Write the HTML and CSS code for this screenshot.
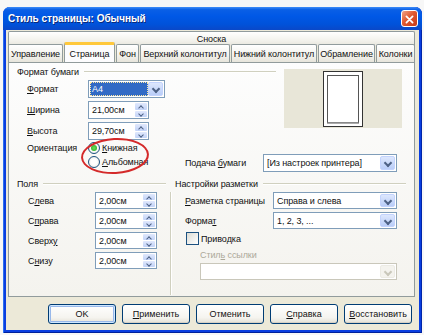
FILE: index.html
```html
<!DOCTYPE html>
<html>
<head>
  <meta charset="utf-8">
  <link rel="stylesheet" href="styles.css">
</head>
<body>
<div class="window">
  <div class="titlebar">
    <span class="title">Стиль страницы: Обычный</span>
    <span class="close">
      <svg width="17" height="17" viewBox="0 0 17 17">
        <path d="M5 5 L12 12 M12 5 L5 12" stroke="#fff" stroke-width="2" stroke-linecap="round"/>
      </svg>
    </span>
  </div>

  <div class="client">
    <div class="tabs">
      <div class="tabrow back">
        <div class="tab wide">Сноска</div>
      </div>
      <div class="tabrow front">
        <div class="tab t1">Управление</div>
        <div class="tab t2 sel">Страница</div>
        <div class="tab t3">Фон</div>
        <div class="tab t4">Верхний колонтитул</div>
        <div class="tab t5">Нижний колонтитул</div>
        <div class="tab t6">Обрамление</div>
        <div class="tab t7">Колонки</div>
      </div>
    </div>

    <div class="panel">
      <!-- paper format -->
      <div class="top">
        <div class="paper">
          <div class="legend"><span>Формат бумаги</span></div>
          <div class="row">
            <label class="lbl"><u>Ф</u>ормат</label>
            <div class="combo focus w77"><span class="val"><span class="hl">A4</span></span><span class="drop"></span></div>
          </div>
          <div class="row">
            <label class="lbl"><u>Ш</u>ирина</label>
            <div class="spin w61"><span class="val">21,00см</span><span class="arrows"><i class="up"></i><i class="dn"></i></span></div>
          </div>
          <div class="row">
            <label class="lbl"><u>В</u>ысота</label>
            <div class="spin w61"><span class="val">29,70см</span><span class="arrows"><i class="up"></i><i class="dn"></i></span></div>
          </div>
        </div>
        <div class="preview">
          <div class="page"><div class="margins"></div></div>
        </div>
      </div>

      <div class="orient">
        <label class="lbl">Ориентация</label>
        <div class="radios">
          <div class="radio on"><span class="dot"></span><u>К</u>нижная</div>
          <div class="radio"><span class="dot"></span><u>А</u>льбомная</div>
        </div>
        <div class="feed">
          <label class="flbl">Подача <u>б</u>умаги</label>
          <div class="combo w134"><span class="val">[Из настроек принтера]</span><span class="drop"></span></div>
        </div>
      </div>

      <div class="mark"></div>

      <!-- margins and layout -->
      <div class="bottom">
        <div class="fields">
          <div class="legend"><span>Поля</span></div>
          <div class="frow">
            <label class="flb">С<u>л</u>ева</label>
            <div class="spin w62"><span class="val">2,00см</span><span class="arrows"><i class="up"></i><i class="dn"></i></span></div>
          </div>
          <div class="frow">
            <label class="flb">С<u>п</u>рава</label>
            <div class="spin w62"><span class="val">2,00см</span><span class="arrows"><i class="up"></i><i class="dn"></i></span></div>
          </div>
          <div class="frow">
            <label class="flb">Сверх<u>у</u></label>
            <div class="spin w62"><span class="val">2,00см</span><span class="arrows"><i class="up"></i><i class="dn"></i></span></div>
          </div>
          <div class="frow">
            <label class="flb">С<u>н</u>изу</label>
            <div class="spin w62"><span class="val">2,00см</span><span class="arrows"><i class="up"></i><i class="dn"></i></span></div>
          </div>
        </div>
        <div class="vsep"><div class="vline"></div></div>
        <div class="layout">
          <div class="legend"><span>Настройки разметки</span></div>
          <div class="frow">
            <label class="llb"><u>Р</u>азметка страницы</label>
            <div class="combo w124"><span class="val">Справа и слева</span><span class="drop"></span></div>
          </div>
          <div class="frow">
            <label class="llb">Форма<u>т</u></label>
            <div class="combo w124"><span class="val">1, 2, 3, ...</span><span class="drop"></span></div>
          </div>
          <div class="check"><span class="box"></span>Приво<u>д</u>ка</div>
          <div class="dislbl">Стил<u>ь</u> ссылки</div>
          <div class="combo off w197"><span class="val"></span><span class="drop"></span></div>
        </div>
      </div>
    </div>

    <div class="buttons">
      <button class="btn default">OK</button>
      <button class="btn"><u>П</u>рименить</button>
      <button class="btn">Отменить</button>
      <button class="btn"><u>С</u>правка</button>
      <button class="btn"><u>В</u>осстановить</button>
    </div>
  </div>
</div>
</body>
</html>
```

FILE: styles.css
```css
* {
  box-sizing: border-box;
}

body {
  margin: 0;
  background: #f7f7f7;
  font-family: "Liberation Sans", Arial, sans-serif;
  font-size: 9px;
  letter-spacing: -0.1px;
  color: #111;
}

u {
  text-decoration: underline;
  text-underline-offset: 1px;
}

.window {
  margin: 7px 0 0 3px;
  width: 419px;
  height: 326px;
  padding: 0 3px 3px;
  background: #0a3ee0;
  border-radius: 7px 7px 0 0;
  display: flex;
  flex-direction: column;
  box-shadow: inset 1px 0 #2b6ff0, inset -1px 0 #0025a8, inset 0 -1px #00209a;
}

/* title bar */
.titlebar {
  height: 23px;
  margin: 0 -3px;
  padding: 0 4px 0 5px;
  border-radius: 7px 7px 0 0;
  background: linear-gradient(#3e8cf8 0, #0a5fe6 12%, #0058e6 40%, #0052da 75%, #0a48c8 100%);
  display: flex;
  align-items: center;
  justify-content: space-between;
}

.title {
  color: #fff;
  font-weight: bold;
  font-size: 10px;
  letter-spacing: 0;
  text-shadow: 1px 1px 0 #0a2a7a;
}

.close {
  width: 17px;
  height: 17px;
  border: 1px solid #fff;
  border-radius: 3px;
  background: linear-gradient(135deg, #f0a48a, #e0592f 45%, #c53a17);
  display: flex;
}

/* client area */
.client {
  flex: 1;
  background: #ece9d8;
  padding: 1px 4px 0 2px;
  display: flex;
  flex-direction: column;
}

.tabs {
  height: 31px;
  position: relative;
}

.tabrow {
  display: flex;
}

.tabrow.back {
  height: 14px;
}

.tabrow.front {
  height: 18px;
  margin-top: -1px;
  gap: 1px;
}

.tab {
  height: 18px;
  border: 1px solid #919b9c;
  border-bottom: none;
  border-radius: 2px 2px 0 0;
  background: linear-gradient(#fff, #f3f2ec 60%, #e7e5dc);
  display: flex;
  align-items: center;
  justify-content: center;
  white-space: nowrap;
}

.tab.wide {
  flex: 1;
  height: 15px;
}

.t1 { width: 55px; }
.t2 { width: 51px; }
.t3 { width: 23px; }
.t4 { width: 90px; }
.t5 { width: 86px; }
.t6 { width: 57px; }
.t7 { flex: 1; }

.tab.sel {
  height: 20px;
  margin: -2px 0 -1px;
  background: #fcfcfe;
  border-top: 3px solid #ffc83c;
  position: relative;
  z-index: 2;
}

/* tab panel */
.panel {
  height: 235px;
  border: 1px solid #919b9c;
  background: linear-gradient(#fdfdfd, #f4f3ee);
  padding: 3px 8px 0 8px;
  position: relative;
}

.legend {
  height: 11px;
  display: flex;
  align-items: center;
  white-space: nowrap;
}

.legend::after {
  content: "";
  flex: 1;
  height: 0;
  margin-left: 5px;
  border-top: 1px solid #d0d0bf;
  border-bottom: 1px solid #fff;
}

.top {
  display: flex;
}

.paper {
  width: 259px;
}

.row {
  display: flex;
  align-items: center;
  height: 18px;
  margin-top: 3px;
}

.row:first-of-type {
  margin-top: 1px;
}

.lbl {
  width: 71px;
  padding-left: 10px;
}

.preview {
  margin: 3px 0 0 8px;
  width: 118px;
  height: 59px;
  background: #e8e6d8;
  display: flex;
  align-items: center;
  justify-content: center;
}

.page {
  width: 40px;
  height: 56px;
  border: 1px solid #333;
  background: #fff;
  padding: 3px;
}

.margins {
  height: 100%;
  border: 1px solid #555;
  border-bottom-color: #888;
  box-shadow: 0 1px 0 #aaa;
}

/* inputs */
.combo, .spin {
  height: 18px;
  border: 1px solid #7f9db9;
  background: #fff;
  display: flex;
  padding: 1px;
}

.val {
  flex: 1;
  display: flex;
  align-items: center;
  padding-left: 2px;
  white-space: nowrap;
  overflow: hidden;
}

.combo.focus .val {
  padding-left: 0;
}

.hl {
  display: flex;
  align-items: center;
  height: 100%;
  width: 100%;
  padding-left: 2px;
  background: #316ac5;
  color: #fff;
  outline: 1px dotted #ffe9a0;
  outline-offset: -1px;
}

.drop {
  width: 15px;
  border-radius: 2px;
  background: linear-gradient(#dde7fd, #b9cdf8);
  border: 1px solid #c3d3fd;
  position: relative;
}

.drop::after {
  content: "";
  position: absolute;
  left: 4px;
  top: 3px;
  width: 4px;
  height: 4px;
  border-right: 2px solid #4d6185;
  border-bottom: 2px solid #4d6185;
  transform: rotate(45deg);
}

.combo.off {
  border-color: #c9c7ba;
}

.combo.off .drop {
  background: #f4f3ee;
  border-color: #ecebe4;
}

.combo.off .drop::after {
  border-color: #c9c7ba;
}

.arrows {
  width: 12px;
  display: flex;
  flex-direction: column;
  gap: 1px;
}

.arrows i {
  flex: 1;
  background: linear-gradient(#e0e8fc, #c2d3f8);
  border-radius: 1px;
  position: relative;
}

.arrows i::after {
  content: "";
  position: absolute;
  left: 4px;
  width: 3px;
  height: 3px;
  border-left: 1px solid #4d6185;
  border-top: 1px solid #4d6185;
}

.arrows .up::after {
  top: 3px;
  transform: rotate(45deg);
}

.arrows .dn::after {
  top: 1px;
  transform: rotate(-135deg);
}

.w61 { width: 61px; }
.w62 { width: 62px; }
.w77 { width: 77px; }
.w124 { width: 124px; }
.w134 { width: 134px; }
.w197 { width: 197px; }

/* orientation */
.orient {
  display: flex;
  align-items: flex-start;
  margin-top: 1px;
}

.orient .lbl {
  height: 14px;
  line-height: 14px;
}

.radios {
  width: 97px;
}

.radio {
  height: 14px;
  display: flex;
  align-items: center;
}

.dot {
  width: 12px;
  height: 12px;
  border: 1px solid #1c5180;
  border-radius: 50%;
  background: radial-gradient(#fff 40%, #e2e2da);
  margin-right: 2px;
  position: relative;
}

.radio.on .dot::after {
  content: "";
  position: absolute;
  left: 2px;
  top: 2px;
  width: 6px;
  height: 6px;
  border-radius: 50%;
  background: radial-gradient(#6ee05a, #21a121);
}

.feed {
  display: flex;
  align-items: center;
  margin-top: 13px;
}

.flbl {
  width: 78px;
}

/* red hand-drawn mark over the radios */
.mark {
  position: absolute;
  left: 72px;
  top: 75px;
  width: 68px;
  height: 36px;
  border: 2px solid #d42a2a;
  border-radius: 50%;
  transform: rotate(-3deg);
}

/* lower part */
.bottom {
  display: flex;
  margin-top: 6px;
}

.fields {
  width: 149px;
}

.vsep {
  width: 9px;
  padding: 14px 0 0 4px;
}

.vline {
  height: 103px;
  width: 2px;
  border-left: 1px solid #d0d0bf;
  border-right: 1px solid #fff;
}

.layout {
  width: 231px;
}

.frow {
  display: flex;
  align-items: center;
  height: 17px;
  margin-top: 3px;
}

.frow .spin, .frow .combo {
  height: 17px;
}

.flb {
  width: 78px;
  padding-left: 11px;
}

.llb {
  width: 98px;
  padding-left: 10px;
  white-space: nowrap;
}

.check {
  display: flex;
  align-items: center;
  height: 13px;
  margin-top: 3px;
  padding-left: 11px;
}

.box {
  width: 13px;
  height: 13px;
  border: 1px solid #1c5180;
  background: linear-gradient(135deg, #dcdcd5, #fff);
  margin-right: 2px;
}

.dislbl {
  height: 12px;
  line-height: 12px;
  margin-top: 4px;
  padding-left: 25px;
  color: #aca899;
}

.layout .combo.off {
  margin: 2px 0 0 25px;
  height: 17px;
}

/* dialog buttons */
.buttons {
  display: flex;
  justify-content: flex-end;
  gap: 6px;
  margin-top: 7px;
  padding-right: 3px;
}

.btn {
  width: 68px;
  height: 20px;
  padding: 0;
  font: inherit;
  color: #111;
  border: 1px solid #003c74;
  border-radius: 3px;
  background: linear-gradient(#fff, #f5f4ef 70%, #e3e0d6);
  box-shadow: inset 0 -1px #d6d0c5;
}

.btn.default {
  box-shadow: inset 0 0 0 1px #cee7ff, inset 0 0 0 2px #98b8ea;
}
```
